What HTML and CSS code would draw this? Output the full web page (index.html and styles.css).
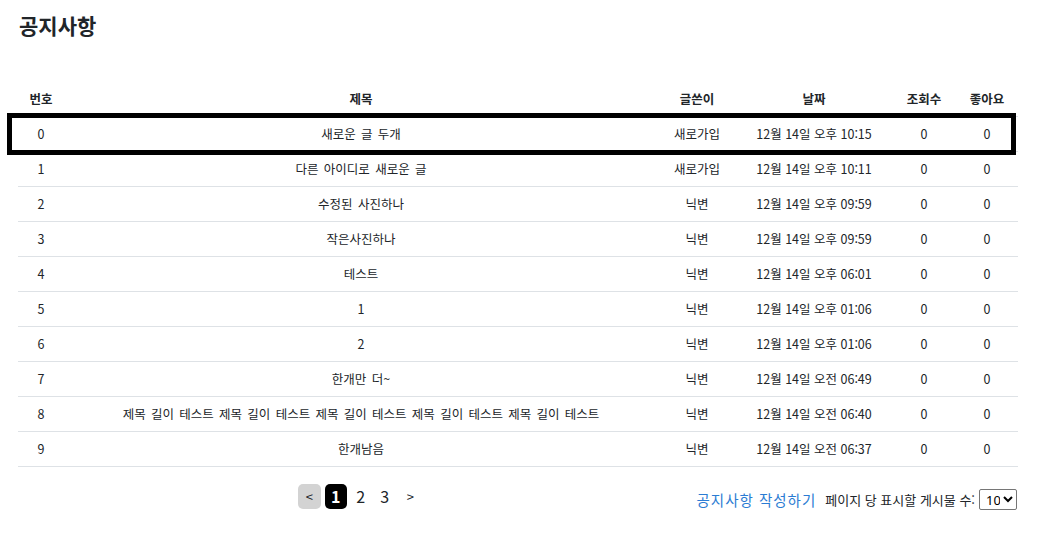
FILE: index.html
```html
<!DOCTYPE html>
<html lang="ko">
<head>
<meta charset="utf-8">
<title>공지사항</title>
<link rel="stylesheet" href="styles.css">
</head>
<body>
<div class="page">
  <h1 class="title">공지사항</h1>
  <div class="table-wrap">
    <table class="board">
      <thead>
        <tr>
          <th class="c-no">번호</th>
          <th class="c-title">제목</th>
          <th class="c-writer">글쓴이</th>
          <th class="c-date">날짜</th>
          <th class="c-view">조회수</th>
          <th class="c-like">좋아요</th>
        </tr>
      </thead>
      <tbody>
        <tr><td>0</td><td class="t-title">새로운 글 두개</td><td>새로가입</td><td>12월 14일 오후 10:15</td><td>0</td><td>0</td></tr>
        <tr><td>1</td><td class="t-title">다른 아이디로 새로운 글</td><td>새로가입</td><td>12월 14일 오후 10:11</td><td>0</td><td>0</td></tr>
        <tr><td>2</td><td class="t-title">수정된 사진하나</td><td>닉변</td><td>12월 14일 오후 09:59</td><td>0</td><td>0</td></tr>
        <tr><td>3</td><td class="t-title">작은사진하나</td><td>닉변</td><td>12월 14일 오후 09:59</td><td>0</td><td>0</td></tr>
        <tr><td>4</td><td class="t-title">테스트</td><td>닉변</td><td>12월 14일 오후 06:01</td><td>0</td><td>0</td></tr>
        <tr><td>5</td><td class="t-title">1</td><td>닉변</td><td>12월 14일 오후 01:06</td><td>0</td><td>0</td></tr>
        <tr><td>6</td><td class="t-title">2</td><td>닉변</td><td>12월 14일 오후 01:06</td><td>0</td><td>0</td></tr>
        <tr><td>7</td><td class="t-title">한개만 더~</td><td>닉변</td><td>12월 14일 오전 06:49</td><td>0</td><td>0</td></tr>
        <tr><td>8</td><td class="t-title">제목 길이 테스트 제목 길이 테스트 제목 길이 테스트 제목 길이 테스트 제목 길이 테스트</td><td>닉변</td><td>12월 14일 오전 06:40</td><td>0</td><td>0</td></tr>
        <tr><td>9</td><td class="t-title">한개남음</td><td>닉변</td><td>12월 14일 오전 06:37</td><td>0</td><td>0</td></tr>
      </tbody>
    </table>
    <div class="selected-box"></div>
  </div>
  <div class="footer">
    <div class="pager">
      <span class="pg pg-arrow pg-disabled">&lt;</span>
      <span class="pg pg-num pg-active">1</span>
      <span class="pg pg-num">2</span>
      <span class="pg pg-num">3</span>
      <span class="pg pg-arrow">&gt;</span>
    </div>
    <div class="controls">
      <a class="write-link" href="#">공지사항 작성하기</a>
      <label class="per-page">페이지 당 표시할 게시물 수:
        <select class="per-select">
          <option>10</option>
          <option>20</option>
        </select>
      </label>
    </div>
  </div>
</div>
</body>
</html>
```

FILE: styles.css
```css
html, body {
  margin: 0;
  padding: 0;
  background: #fff;
}

body {
  font-family: "Noto Sans CJK KR", "Noto Sans", sans-serif;
  color: #212529;
  font-size: 12.5px;
}

.page {
  width: 1000px;
  padding: 0 27px 0 18px;
}

.title {
  margin: 0 0 41px 1px;
  padding-top: 10px;
  font-size: 21px;
  line-height: 30px;
  font-weight: 700;
}

.table-wrap {
  position: relative;
}

.board {
  width: 1000px;
  border-collapse: collapse;
  table-layout: fixed;
}

.board th,
.board td {
  height: 34px;
  padding: 0;
  text-align: center;
  vertical-align: middle;
  border-bottom: 1px solid #dee2e6;
  font-size: 12.5px;
  line-height: 16px;
  white-space: nowrap;
}

.board .t-title {
  word-spacing: 1.8px;
}

.board th {
  height: 35px;
  font-weight: 700;
}

.c-no { width: 46px; }
.c-title { width: 594px; }
.c-writer { width: 78px; }
.c-date { width: 156px; }
.c-view { width: 64px; }
.c-like { width: 62px; }

.selected-box {
  position: absolute;
  left: -11px;
  top: 32px;
  width: 1009px;
  height: 42px;
  box-sizing: border-box;
  border: 5px solid #000;
  pointer-events: none;
}

.footer {
  display: flex;
  align-items: center;
  margin-top: 15px;
}

.pager {
  flex: 1;
  display: flex;
  justify-content: center;
  align-items: center;
  gap: 4px;
  padding-left: 5px;
}

.pg {
  display: flex;
  align-items: center;
  justify-content: center;
  height: 25px;
  border-radius: 5px;
}

.pg-arrow {
  width: 23px;
  font-size: 13px;
}

.pg-num {
  width: 20px;
  font-size: 16px;
}

.pg-disabled {
  background: #d3d3d3;
}

.pg-active {
  width: 22px;
  background: #000;
  color: #fff;
  font-weight: 700;
}

.controls {
  display: flex;
  align-items: center;
  gap: 9px;
  padding-right: 1px;
  padding-top: 7px;
}

.write-link {
  color: #2b7cd3;
  text-decoration: none;
  font-size: 14.5px;
  letter-spacing: 1px;
}

.per-page {
  display: flex;
  align-items: center;
  gap: 4px;
  font-size: 13px;
}

.per-select {
  font-family: "Noto Sans", "Liberation Sans", sans-serif;
  font-size: 13px;
  width: 38px;
  height: 21px;
  padding: 0 0 0 2px;
  border: 1px solid #767676;
  border-radius: 2px;
  background: #fff;
  color: #000;
}
```
